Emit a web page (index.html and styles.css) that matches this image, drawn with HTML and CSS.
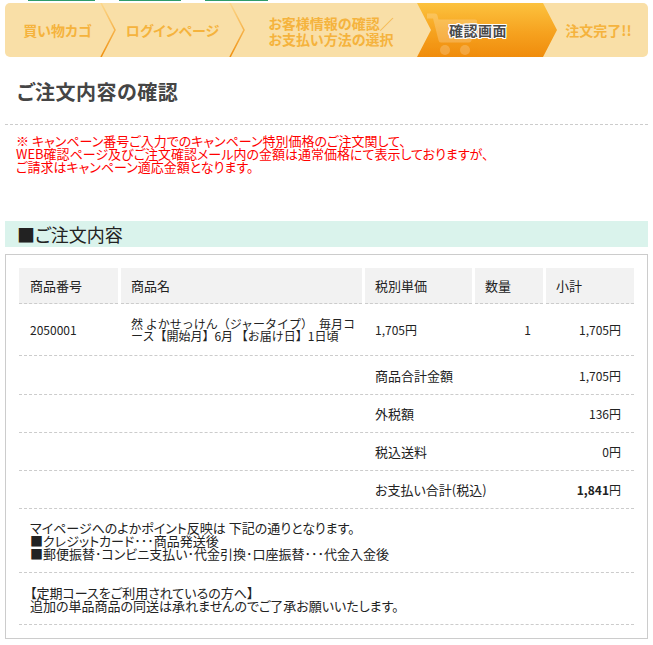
FILE: index.html
```html
<!DOCTYPE html>
<html lang="ja">
<head>
<meta charset="utf-8">
<title>ご注文内容の確認</title>
<link rel="stylesheet" href="styles.css">
</head>
<body>
<div class="page">
  <div class="tab-edges">
    <span class="tab-edge e1"></span>
    <span class="tab-edge e2"></span>
    <span class="tab-edge e3"></span>
  </div>

  <nav class="steps">
    <div class="step s1">買い物カゴ</div>
    <svg class="sep" width="16" height="54" viewBox="0 0 16 54">
      <defs>
        <linearGradient id="sg1" x1="0" y1="0" x2="0" y2="1">
          <stop offset="0" stop-color="#fcd88c"/>
          <stop offset="1" stop-color="#f0900f"/>
        </linearGradient>
      </defs>
      <path d="M1 0 L15 27 L1 54" fill="none" stroke="url(#sg1)" stroke-width="1.6"/>
    </svg>
    <div class="step s2">ログインページ</div>
    <svg class="sep" width="16" height="54" viewBox="0 0 16 54">
      <defs>
        <linearGradient id="sg2" x1="0" y1="0" x2="0" y2="1">
          <stop offset="0" stop-color="#fcd88c"/>
          <stop offset="1" stop-color="#f0900f"/>
        </linearGradient>
      </defs>
      <path d="M1 0 L15 27 L1 54" fill="none" stroke="url(#sg2)" stroke-width="1.6"/>
    </svg>
    <div class="step s3">お客様情報の確認／<br>お支払い方法の選択</div>
    <div class="step active">
      <svg class="cart" width="52" height="46" viewBox="0 0 52 46">
        <path d="M2 4 L10 4 L16 28 L44 28 L50 10 L13 10" fill="none" stroke="#ffffff" stroke-width="5" stroke-linejoin="round"/>
        <path d="M14 12 L48 12 L43 26 L17 26 Z" fill="#ffffff"/>
        <circle cx="20" cy="38" r="5" fill="#ffffff"/>
        <circle cx="40" cy="38" r="5" fill="#ffffff"/>
      </svg>
      <span class="active-label">確認画面</span>
    </div>
    <div class="step s5">注文完了!!</div>
  </nav>

  <h1 class="page-title">ご注文内容の確認</h1>

  <p class="notice">※ キャンペーン番号ご入力でのキャンペーン特別価格のご注文関して、<br>WEB確認ページ及びご注文確認メール内の金額は通常価格にて表示しておりますが、<br>ご請求はキャンペーン適応金額となります。</p>

  <h2 class="section-title">■ご注文内容</h2>

  <div class="order-box">
    <div class="order-table">
      <div class="row head">
        <div class="cell">商品番号</div>
        <div class="cell">商品名</div>
        <div class="cell">税別単価</div>
        <div class="cell">数量</div>
        <div class="cell">小計</div>
      </div>
      <div class="row item">
        <div class="cell">2050001</div>
        <div class="cell name"><span>然 よかせっけん（ジャータイプ）　毎月コース【開始月】6月 【お届け日】1日頃</span></div>
        <div class="cell">1,705円</div>
        <div class="cell num qty">1</div>
        <div class="cell num">1,705円</div>
      </div>
      <div class="row sum">
        <div class="cell label">商品合計金額</div>
        <div class="cell num">1,705円</div>
      </div>
      <div class="row sum">
        <div class="cell label">外税額</div>
        <div class="cell num">136円</div>
      </div>
      <div class="row sum">
        <div class="cell label">税込送料</div>
        <div class="cell num">0円</div>
      </div>
      <div class="row sum">
        <div class="cell label">お支払い合計(税込)</div>
        <div class="cell num"><b>1,841</b>円</div>
      </div>
      <div class="note n1"><p>マイページへのよかポイント反映は 下記の通りとなります。<br>■クレジットカード･･･商品発送後<br>■郵便振替･コンビニ支払い･代金引換･口座振替･･･代金入金後</p></div>
      <div class="note n2"><p>【定期コースをご利用されているの方へ】<br>追加の単品商品の同送は承れませんのでご了承お願いいたします。</p></div>
    </div>
  </div>
</div>
</body>
</html>
```

FILE: styles.css
```css
* { box-sizing: border-box; }

html, body {
  margin: 0;
  padding: 0;
  background: #ffffff;
}

body {
  font-family: "Noto Sans CJK JP", "Noto Sans", sans-serif;
  font-size: 13px;
  color: #222222;
  font-feature-settings: "palt";
}

.page {
  width: 653px;
  padding: 0 5px;
}

/* strips of tabs above */
.tab-edges {
  position: relative;
  height: 3px;
}
.tab-edge {
  position: absolute;
  top: 0;
  height: 1px;
  background: #2f9b6a;
}
.e1 { left: 23px; width: 67px; }
.e2 { left: 114px; width: 62px; }
.e3 { left: 200px; width: 63px; }

/* step bar */
.steps {
  display: flex;
  height: 54px;
  background: #f9dfa7;
  border-radius: 5px;
  overflow: hidden;
}
.step {
  display: flex;
  align-items: center;
  justify-content: center;
  text-align: center;
  font-weight: 700;
  font-size: 14px;
  line-height: 16px;
  color: #f5b33d;
  flex: none;
}
.sep { flex: none; display: block; }
.s1 { width: 95px; padding-left: 10px; }
.s2 { width: 113px; }
.s3 { width: 172px; padding-top: 1px; }
.s5 { width: 91px; padding-right: 8px; }

.active {
  position: relative;
  width: 140px;
  background: linear-gradient(#fcc23e, #f6a21f 55%, #f08c0c);
  clip-path: polygon(0 0, 126px 0, 140px 27px, 126px 54px, 0 54px, 14px 27px);
  padding-right: 18px;
}
.cart {
  position: absolute;
  left: 8px;
  top: 9px;
  opacity: 0.2;
}
.active-label {
  position: relative;
  color: #4a4a4a;
  font-size: 14px;
  letter-spacing: 0.5px;
  text-shadow: 1px 0 0 #fff, -1px 0 0 #fff, 0 1px 0 #fff, 0 -1px 0 #fff,
               1px 1px 0 #fff, -1px -1px 0 #fff, 1px -1px 0 #fff, -1px 1px 0 #fff;
}

/* title */
.page-title {
  margin: 21px 0 0;
  padding: 0 0 18px 12px;
  font-size: 20px;
  line-height: 28px;
  font-weight: 700;
  letter-spacing: 0.5px;
  color: #454545;
  border-bottom: 1px dashed #cccccc;
}

.notice {
  margin: 9px 0 0;
  padding-left: 11px;
  color: #ff0000;
  font-size: 13px;
  line-height: 13px;
}

.section-title {
  margin: 48px 0 0;
  height: 26px;
  padding-left: 12px;
  background: #daf3ec;
  font-size: 18px;
  line-height: 26px;
  font-weight: 400;
  color: #222222;
}

.order-box {
  margin-top: 7px;
  border: 1px solid #cccccc;
  padding: 13px;
}

.order-table {
  display: flex;
  flex-direction: column;
}

.row {
  display: grid;
  grid-template-columns: 99px 241px 107px 68px 88px;
  column-gap: 3px;
}

.cell {
  display: flex;
  align-items: center;
  padding-left: 10px;
}

.head .cell {
  height: 36px;
  background: #f2f2f2;
  border-bottom: 1px dashed #cccccc;
  font-size: 13px;
}
.head .cell:first-child { padding-left: 11px; }

.item {
  height: 52px;
  border-bottom: 1px dashed #cccccc;
  font-size: 12px;
}
.item .cell:first-child { padding-left: 11px; }
.item .name {
  font-feature-settings: normal;
  line-height: 12px;
  padding-right: 0;
  line-break: loose;
}

.num {
  justify-content: flex-end;
  padding-left: 0;
  padding-right: 13px;
  font-size: 12px;
}
.qty { padding-right: 12px; }

.sum {
  height: 38px;
  border-bottom: 1px dashed #cccccc;
}
.sum:nth-of-type(3),
.sum:last-of-type { height: 39px; }
.sum .label {
  grid-column: 3 / span 2;
  font-size: 13px;
}
.sum .num { grid-column: 5; }
.sum b { font-weight: 700; }

.note {
  display: flex;
  align-items: center;
  padding-left: 11px;
  border-bottom: 1px dashed #cccccc;
  font-size: 13px;
  line-height: 13px;
}
.note p { margin: 0; }
.n1 { height: 64px; }
.n2 { height: 52px; }
```
